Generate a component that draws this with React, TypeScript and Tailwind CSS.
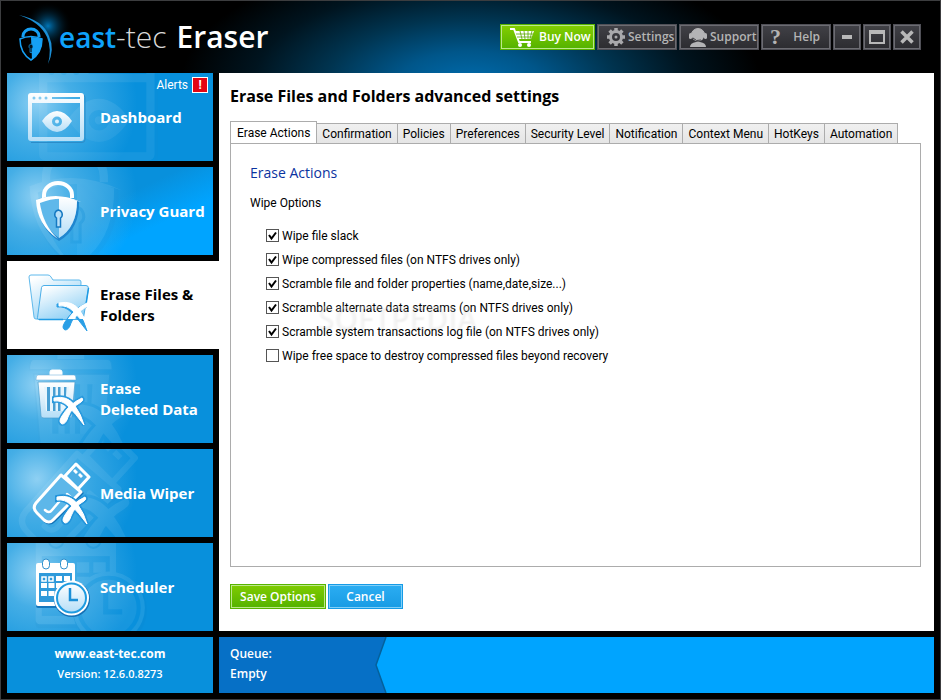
import React, { useState } from 'react';

function Brush({ className = '', transform = '' }: { className?: string; transform?: string }) {
  return (
    <g className={className} transform={transform}>
      <path d="M30 32 Q44 29 51 40 Q57 48 60 59 Q52 48 44 40 Q38 34 30 35 Z" />
      <path d="M58 32 Q60 34 57 36 Q48 41 44 51 Q42 58 38 58 Q34 56 38 50 Q45 38 58 32 Z" />
    </g>
  );
}

function DashboardIcon({ className }: { className: string }) {
  return (
    <svg viewBox="0 0 64 64" className={className} aria-hidden="true">
      <path d="M4 9.500h51a3 3 0 0 1 3 3v42a3 3 0 0 1-3 3H4" fill="none" stroke="#2b8cc9" strokeWidth="1" />
      <path
        fillRule="evenodd"
        fill="url(#ice)"
        d="M4 8h50a3 3 0 0 1 3 3v42a3 3 0 0 1-3 3H4a3 3 0 0 1-3-3V11a3 3 0 0 1 3-3zM5 18v34h48V18zM7 11.500a1.500 1.500 0 1 0 0 3a1.500 1.500 0 1 0 0-3zM13 11.500a1.500 1.500 0 1 0 0 3a1.500 1.500 0 1 0 0-3zM19 11.500a1.500 1.500 0 1 0 0 3a1.500 1.500 0 1 0 0-3zM25 12v2h28v-2z"
      />
      <path
        fillRule="evenodd"
        fill="url(#ice)"
        d="M15 36Q22 26 30 26T45 36Q38 47 30 47T15 36zM30 31.500a5 5 0 1 0 0 10a5 5 0 1 0 0-10zM30 34.500a2 2 0 1 1 0 4a2 2 0 1 1 0-4z"
      />
    </svg>
  );
}

function ShieldIcon({ className }: { className: string }) {
  return (
    <svg viewBox="0 0 64 64" className={className} aria-hidden="true">
      <path d="M17 19v-3a14 12 0 0 1 28 0v3" fill="none" stroke="#fff" strokeWidth="4" />
      <path d="M10 21Q31 13 52 22Q53 50 32 62Q11 49 10 21z" fill="#1f86cf" />
      <path d="M13 22Q31 15 50 22Q50 48 32 59Q14 47 13 22z" fill="#5fb8ea" />
      <path d="M32 18Q41 18 50 22Q50 48 32 59z" fill="url(#ice)" />
      <path d="M9 21Q31 12 54 23Q32 16 13 24Q16 46 31 60Q10 46 9 21z" fill="#fff" />
      <path d="M31.500 31a4.500 4.500 0 0 1 2 8v9h-4v-9a4.500 4.500 0 0 1 2-8z" fill="#b9e0f8" stroke="#1579c2" strokeWidth="1.500" />
    </svg>
  );
}

function FolderIcon({ className }: { className: string }) {
  return (
    <svg viewBox="0 0 64 64" className={className} aria-hidden="true">
      <clipPath id="folder-front">
        <path d="M0 0h64v36l-5 10H0z" />
      </clipPath>
      <path d="M2 4q0-2 2-2h17q2 0 3 2l2 3h26q2 0 2 2l-1 37H9q-2 0-2-2z" fill="url(#folder)" stroke="#5fb9ec" />
      <path d="M17 12.500h42q2.500 0 2.500 3l-5 29q-.5 2-2.500 2H12q-2 0-1.500-2l4-30q.5-2 2.500-2z" fill="url(#folder)" stroke="#4aaee8" />
      <path d="M61.500 15l-3 20M12 46.500h24" stroke="#1f9be4" strokeWidth="1.500" />
      <Brush className="fill-[#2a9fe6] stroke-[#2a9fe6]" transform="translate(0 -1)" />
      <g clipPath="url(#folder-front)">
        <Brush className="fill-white stroke-white" transform="translate(2 -2)" />
      </g>
    </svg>
  );
}

function TrashIcon({ className }: { className: string }) {
  return (
    <svg viewBox="0 0 64 64" className={className} aria-hidden="true">
      <path d="M23 8V5q0-2 2-2h8q2 0 2 2v3" fill="#fff" stroke="#fff" />
      <path d="M11 8h36q2 0 2 5H9q0-5 2-5z" fill="#fff" stroke="#5ea7d5" strokeWidth=".5" />
      <path d="M11 15h37l-3 34q0 2-3 2H17q-3 0-3-2z" fill="url(#ice)" stroke="#4c9dce" strokeWidth=".7" />
      <path d="M17 20h25l-2 24H19z" fill="#e6f5fd" />
      <path d="M20 20h3v24h-3zM26 20h2.500v24H26zM31 20h2.500v24H31zM37 20h2.500l-1 18H37z" fill="#489fd3" />
      <Brush className="fill-[#2a9ade] stroke-[#2a9ade] stroke-4" transform="translate(-3 -1)" />
      <Brush className="fill-white stroke-white" transform="translate(-3 -1)" />
    </svg>
  );
}

function UsbIcon({ className }: { className: string }) {
  return (
    <svg viewBox="0 0 64 64" className={className} aria-hidden="true">
      <g fill="none" strokeLinejoin="round">
        <path d="M34 14L9 42q-4 5 1 10l7 7q5 4 9 0L54 31z" stroke="#1473b8" strokeWidth="3" transform="translate(1 1)" />
        <path d="M34 14L9 42q-4 5 1 10l7 7q5 4 9 0L54 31z" fill="#5db7e9" stroke="#fff" strokeWidth="3" />
        <path d="M38 15L49 3l13 13l-11 12z" fill="#4bade4" stroke="#fff" strokeWidth="3" />
        <path d="M18 49q4 4 7 0l12-14M40 33l6 5" stroke="#fff" strokeWidth="2.500" strokeLinecap="round" />
      </g>
      <path d="M46 10l3 3l2-2l-3-3zM51 14l3 3l2-2l-3-3z" fill="#fff" />
      <Brush className="fill-[#2394da] stroke-[#2394da] stroke-4" transform="translate(0 4)" />
      <Brush className="fill-white stroke-white" transform="translate(0 4)" />
    </svg>
  );
}

function CalendarIcon({ className }: { className: string }) {
  return (
    <svg viewBox="0 0 64 64" className={className} aria-hidden="true">
      <rect x="9" y="10" width="39" height="43" rx="2" fill="#1377bd" />
      <rect x="9" y="8" width="39" height="43" rx="2" fill="#fff" />
      <rect x="12" y="18" width="33" height="29" fill="#2f9ada" />
      <rect x="15.500" y="4" width="7" height="10" rx="3.500" fill="#fff" stroke="#2d8fcc" />
      <rect x="33.500" y="4" width="7" height="10" rx="3.500" fill="#fff" stroke="#2d8fcc" />
      <path d="M15 22h4v4h-4zM22 22h4v4h-4z" fill="none" stroke="#fff" strokeWidth="1.500" />
      <path d="M29 21h6v5h-6zM37 21h6v5h-6zM14 28h6v5h-6zM21.500 28h6v5h-6zM29 28h6v5h-6zM14 36h6v5h-6zM21.500 36h6v5h-6z" fill="#fff" />
      <circle cx="45" cy="44" r="18" fill="#1470b5" />
      <circle cx="44.500" cy="43" r="17.500" fill="#fff" />
      <circle cx="44.500" cy="43" r="14.500" fill="url(#ice)" stroke="#1f9be0" strokeWidth="2" />
      <path d="M43 33v12h8" fill="none" stroke="#1c8fd6" strokeWidth="2.500" />
    </svg>
  );
}

const tiles = [
  { name: 'Dashboard', icon: DashboardIcon, ghost: 'left-[30px] -top-7', alert: true },
  { name: 'Privacy Guard', icon: ShieldIcon, ghost: 'left-1 -top-6', bright: true },
  { name: 'Erase Files &\nFolders', icon: FolderIcon, ghost: '', selected: true },
  { name: 'Erase\nDeleted Data', icon: TrashIcon, ghost: 'left-1 -top-3' },
  { name: 'Media Wiper', icon: UsbIcon, ghost: 'left-0 -top-6' },
  { name: 'Scheduler', icon: CalendarIcon, ghost: 'left-2.5 -top-6' },
];

const tabs = [
  'Erase Actions',
  'Confirmation',
  'Policies',
  'Preferences',
  'Security Level',
  'Notification',
  'Context Menu',
  'HotKeys',
  'Automation',
];

const options = [
  { label: 'Wipe file slack', on: true },
  { label: 'Wipe compressed files (on NTFS drives only)', on: true },
  { label: 'Scramble file and folder properties (name,date,size...)', on: true },
  { label: 'Scramble alternate data streams (on NTFS drives only)', on: true },
  { label: 'Scramble system transactions log file (on NTFS drives only)', on: true },
  { label: 'Wipe free space to destroy compressed files beyond recovery', on: false },
];

const darkButton =
  'flex h-[26px] items-center border border-[#505057] bg-linear-to-b from-[#414147] to-[#2c2c30] text-xs font-semibold text-[#b4b4b4] inset-ring inset-ring-[#6c6c72]';

function Header() {
  return (
    <header className="flex h-[72px] items-start justify-between bg-[radial-gradient(ellipse_290px_130px_at_50%_115%,#006cae_0%,#00568a_25%,#003450_50%,#00141f_75%,#000_100%)] pr-[19px]">
      <div className="flex h-full items-center">
        <svg viewBox="0 0 58 72" className="h-full w-[58px] overflow-visible" aria-hidden="true">
          <circle cx="47" cy="25" r="24" fill="url(#glow)" />
          <path d="M0 12H17Q42 20 48 36Q53 49 47 64V72H0z" fill="#000" />
          <path d="M18 14Q42 19 48 35Q54 48 47 63Q51 48 46 36Q39 21 18 14z" fill="#1b8fd6" />
          <path d="M22 36v-1a8 7 0 0 1 16 0v1" fill="none" stroke="#15a0f5" strokeWidth="3" />
          <path d="M19 38Q30 33 41 38Q41 52 30 59Q19 52 19 38z" fill="none" stroke="#15a0f5" strokeWidth="1.500" />
          <path d="M30 36Q36 36 41 38Q41 52 31 59z" fill="#15a0f5" />
          <path d="M30 43a2.500 2.500 0 0 1 1 4.500v4h-2v-4a2.500 2.500 0 0 1 1-4.500z" fill="#001522" stroke="#15a0f5" strokeWidth=".7" />
        </svg>
        <h1 className="relative flex items-baseline text-[30px] leading-9 text-white">
          <span className="text-[28px] font-semibold text-[#0ea2fb]">east</span>
          <span className="mr-2.5 font-light text-[#d8d8d8]">-tec</span>
          <span className="font-semibold">Eraser</span>
        </h1>
      </div>
      <div className="flex gap-0.5 pt-[23px]">
        <button className="flex h-[26px] w-[95px] items-center gap-1 border border-[#58b400] bg-linear-to-b from-[#84cf00] to-[#53b200] pl-2 text-xs font-semibold text-white inset-ring inset-ring-[#bce88a]">
          <svg viewBox="0 0 26 20" className="h-5 w-[26px] shrink-0" aria-hidden="true">
            <path d="M1 2h4l5 13h12" fill="none" stroke="#fff" strokeWidth="2" />
            <path d="M6 4h19l-3 8H9z" fill="#fff" />
            <path d="M7 7h17M8 10h15M11 4l2 8M15 4l1 8M19 4v8M23 4l-2 8" stroke="#58a800" strokeWidth=".8" />
            <circle cx="11" cy="18" r="2" fill="#fff" />
            <circle cx="20" cy="18" r="2" fill="#fff" />
          </svg>
          <span className="whitespace-nowrap">Buy Now</span>
        </button>
        <button className={`${darkButton} w-20 gap-0.5 pl-2`}>
          <svg viewBox="0 0 20 20" className="h-5 w-5 shrink-0" aria-hidden="true">
            <circle cx="10" cy="10" r="5.500" fill="none" stroke="#a9a9ac" strokeWidth="3" />
            <path d="M10 1v4M10 15v4M1 10h4M15 10h4M3.600 3.600l3 3M13.400 13.400l3 3M3.600 16.400l3-3M13.400 6.600l3-3" stroke="#a9a9ac" strokeWidth="3.500" />
            <circle cx="10" cy="10" r="1.500" fill="#a9a9ac" />
          </svg>
          Settings
        </button>
        <button className={`${darkButton} w-20 gap-0.5 pl-2`}>
          <svg viewBox="0 0 20 20" className="h-5 w-5 shrink-0" aria-hidden="true" fill="#b4b4b6">
            <circle cx="10" cy="8" r="6.500" />
            <path d="M3 9a7 7.500 0 0 1 14 0" fill="none" stroke="#b4b4b6" />
            <rect x="1" y="6" width="3" height="6" rx="1.500" />
            <rect x="16" y="6" width="3" height="6" rx="1.500" />
            <path d="M2 20q0-4 6-5h4q6 1 6 5z" />
            <path d="M5 11q3 4 8 2" fill="none" stroke="#3a3a3f" />
          </svg>
          Support
        </button>
        <button className={`${darkButton} w-[70px] justify-between pr-2.5 pl-2`}>
          <span className="font-['Liberation_Serif',serif] text-[22px] leading-5" aria-hidden="true">?</span>
          Help
        </button>
        <button aria-label="Minimize" className={`${darkButton} w-7 justify-center`}>
          <span className="h-1 w-2.5 bg-[#b8b8b8]" />
        </button>
        <button aria-label="Maximize" className={`${darkButton} w-7 justify-center`}>
          <span className="h-3.5 w-4 border-2 border-t-4 border-[#b8b8b8]" />
        </button>
        <button aria-label="Close" className={`${darkButton} w-7 justify-center`}>
          <svg viewBox="0 0 14 14" className="size-3.5" aria-hidden="true">
            <path d="M1.500 1.500l11 11M12.500 1.500l-11 11" stroke="#b8b8b8" strokeWidth="3.500" />
          </svg>
        </button>
      </div>
    </header>
  );
}

function Sidebar() {
  return (
    <nav className="flex w-[212px] shrink-0 flex-col gap-1.5">
      {tiles.map((t) => {
        const Icon = t.icon;
        const look = t.selected
          ? 'bg-white text-black'
          : t.bright
            ? 'mr-1.5 text-white bg-[radial-gradient(circle_at_30px_30px,#8ed0f3_0%,#45aee6_35px,transparent_100px),linear-gradient(155deg,#0890dc_45%,#00a4ff_70%)]'
            : 'mr-1.5 text-white bg-[#0890dc] bg-[radial-gradient(circle_at_30px_30px,#8ed0f3_0%,#45aee6_35px,transparent_100px)]';
        return (
          <button
            key={t.name}
            className={`relative flex min-h-[88px] flex-1 items-center gap-[9px] overflow-hidden pl-5 text-left text-[15px] leading-[21px] font-bold ${look}`}
          >
            {!t.selected && (
              <span className={`absolute opacity-8 ${t.ghost}`}>
                <Icon className="size-[132px]" />
              </span>
            )}
            <Icon className="relative size-16 shrink-0" />
            <span className="relative whitespace-pre-line">{t.name}</span>
            {t.alert && (
              <span className="absolute top-1 right-[5px] flex items-center gap-1 font-['Roboto',sans-serif] text-xs font-normal">
                Alerts
                <span className="flex size-4 items-center justify-center border border-white bg-[#e30613] font-bold">!</span>
              </span>
            )}
          </button>
        );
      })}
    </nav>
  );
}

function Settings() {
  const [tab, setTab] = useState('Erase Actions');
  const [checked, setChecked] = useState(options.map((o) => o.on));

  const toggle = (i: number) => setChecked(checked.map((c, n) => (n === i ? !c : c)));

  return (
    <main className="flex min-w-0 flex-1 flex-col bg-white pt-[11px] pr-[13px] pb-[22px] pl-[11px] text-black">
      <h2 className="mb-[13px] text-base leading-6 font-bold">Erase Files and Folders advanced settings</h2>
      <div role="tablist" className="flex items-end font-['Roboto',sans-serif] text-xs whitespace-nowrap">
        {tabs.map((name) => (
          <button
            key={name}
            role="tab"
            aria-selected={name === tab}
            onClick={() => setTab(name)}
            className={
              name === tab
                ? 'relative -mb-px h-[23px] border border-b-0 border-[#acacac] bg-white px-1.5'
                : 'h-5 border-t border-r border-[#acacac] bg-linear-to-b from-[#f0f0f0] to-[#e5e5e5] px-[5px]'
            }
          >
            {name}
          </button>
        ))}
      </div>
      <section className="relative flex-1 border border-[#acacac] px-[19px] pt-[17px]">
        <h3 className="text-sm leading-6 text-[#0a33a0]">Erase Actions</h3>
        <p className="mt-1.5 font-['Roboto',sans-serif] text-xs leading-6">Wipe Options</p>
        <div className="mt-[9px] pl-4">
          {options.map((o, i) => (
            <label key={o.label} className="flex h-6 items-start gap-[3px] font-['Roboto',sans-serif] text-xs leading-6">
              <span className="mt-[5px] grid size-[13px] shrink-0">
                <input
                  type="checkbox"
                  checked={checked[i]}
                  onChange={() => toggle(i)}
                  className="col-start-1 row-start-1 size-[13px] appearance-none border border-[#555] bg-white"
                />
                {checked[i] && (
                  <svg viewBox="0 0 13 13" className="pointer-events-none col-start-1 row-start-1 size-[13px]" aria-hidden="true">
                    <path d="M3 6l2.500 3.500L10 3.500" fill="none" stroke="#000" strokeWidth="2" />
                  </svg>
                )}
              </span>
              {o.label}
            </label>
          ))}
        </div>
        <span
          aria-hidden="true"
          className="pointer-events-none absolute top-[150px] left-[86px] text-[30px] font-semibold text-white/25 text-shadow-[1px_2px_2px_#00000010]"
        >
          SOFTPEDIA
        </span>
      </section>
      <div className="mt-[17px] flex gap-0.5 text-xs font-semibold text-white">
        <button className="h-[25px] w-24 border border-[#58b400] bg-linear-to-b from-[#80cc00] to-[#53b200] inset-ring inset-ring-[#bce88a]">
          Save Options
        </button>
        <button className="h-[25px] w-[75px] border border-[#169be6] bg-linear-to-b from-[#2badf2] to-[#179be4] inset-ring inset-ring-[#7fcff8]">
          Cancel
        </button>
      </div>
    </main>
  );
}

function Footer() {
  return (
    <footer className="mt-1.5 flex min-h-14 gap-1.5 text-xs font-semibold text-white">
      <div className="flex w-[206px] shrink-0 flex-col items-center bg-[#0890dc] pt-[7px] leading-5">
        <a href="#" className="font-bold">www.east-tec.com</a>
        <span className="text-[11px]">Version: 12.6.0.8273</span>
      </div>
      <div className="flex flex-1 bg-[#00a4ff]">
        <div className="w-[156px] bg-[#0670c6] pt-[7px] pl-[11px] leading-5">
          <p>Queue:</p>
          <p>Empty</p>
        </div>
        <svg viewBox="0 0 12 56" preserveAspectRatio="none" className="h-14 w-3" aria-hidden="true">
          <path d="M0 0h11L1 28l10 28H0z" fill="#0670c6" />
          <path d="M11 0L1 28l10 28" fill="none" stroke="#04619c" strokeWidth="1.500" />
        </svg>
      </div>
    </footer>
  );
}

export default function App() {
  return (
    <div className="flex min-h-screen flex-col border border-[#3c3d3f] bg-black font-['Open_Sans','Noto_Sans',sans-serif]">
      <svg className="absolute size-0" aria-hidden="true">
        <defs>
          <linearGradient id="ice" x1="0" y1="0" x2="0" y2="1">
            <stop offset="0" stopColor="#fff" />
            <stop offset="1" stopColor="#b5def7" />
          </linearGradient>
          <linearGradient id="folder" x1="0" y1="0" x2=".6" y2="1">
            <stop offset="0.100" stopColor="#fff" />
            <stop offset="1" stopColor="#8fd0f5" />
          </linearGradient>
          <radialGradient id="glow">
            <stop offset="0" stopColor="#0074b5" />
            <stop offset="1" stopColor="#000" stopOpacity="0" />
          </radialGradient>
        </defs>
      </svg>
      <Header />
      <div className="flex flex-1 px-1.5">
        <Sidebar />
        <Settings />
      </div>
      <div className="px-1.5 pb-1.5">
        <Footer />
      </div>
    </div>
  );
}
